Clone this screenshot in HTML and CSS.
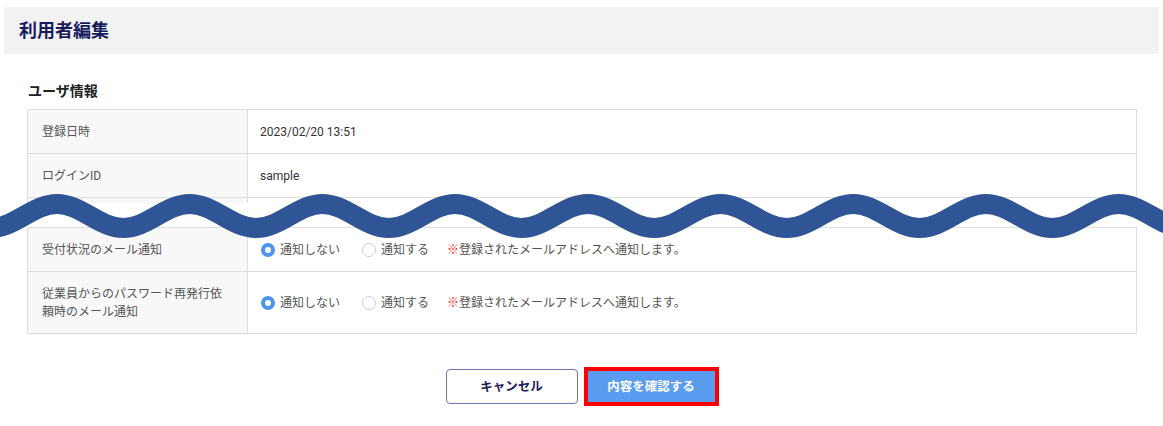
FILE: index.html
```html
<!DOCTYPE html>
<html lang="ja">
<head>
<meta charset="utf-8">
<title>利用者編集</title>
<link rel="stylesheet" href="styles.css">
</head>
<body>
<div class="page">
  <header class="page-header">
    <h1 class="page-title">利用者編集</h1>
  </header>

  <section class="section">
    <h2 class="section-title">ユーザ情報</h2>

    <div class="info-table info-table--top">
      <div class="row row--std">
        <div class="cell-label">登録日時</div>
        <div class="cell-value">2023/02/20 13:51</div>
      </div>
      <div class="row row--std">
        <div class="cell-label">ログインID</div>
        <div class="cell-value">sample</div>
      </div>
      <div class="row row--stub">
        <div class="cell-label"></div>
        <div class="cell-value"></div>
      </div>
    </div>

    <div class="info-table info-table--bottom">
      <div class="row row--std">
        <div class="cell-label">受付状況のメール通知</div>
        <div class="cell-value">
          <div class="radio-group">
            <label class="radio"><input type="radio" name="n1" checked><span>通知しない</span></label>
            <label class="radio"><input type="radio" name="n1"><span>通知する</span></label>
            <p class="note"><span class="note-mark">※</span>登録されたメールアドレスへ通知します。</p>
          </div>
        </div>
      </div>
      <div class="row row--tall">
        <div class="cell-label">従業員からのパスワード再発行依頼時のメール通知</div>
        <div class="cell-value">
          <div class="radio-group">
            <label class="radio"><input type="radio" name="n2" checked><span>通知しない</span></label>
            <label class="radio"><input type="radio" name="n2"><span>通知する</span></label>
            <p class="note"><span class="note-mark">※</span>登録されたメールアドレスへ通知します。</p>
          </div>
        </div>
      </div>
    </div>

    <div class="actions">
      <button type="button" class="btn btn-cancel">キャンセル</button>
      <span class="btn-highlight"><button type="button" class="btn btn-primary">内容を確認する</button></span>
    </div>
  </section>

  <svg class="wave" viewBox="0 0 1163 60" width="1163" height="60" aria-hidden="true">
    <path d="M -75.7 19 C -51.53 19 -33.52 43 -9.35 43 S 32.83 19 57 19 S 99.18 43 123.35 43 S 165.53 19 189.7 19 S 231.88 43 256.05 43 S 298.23 19 322.4 19 S 364.58 43 388.75 43 S 430.93 19 455.1 19 S 497.28 43 521.45 43 S 563.63 19 587.8 19 S 629.98 43 654.15 43 S 696.33 19 720.5 19 S 762.68 43 786.85 43 S 829.03 19 853.2 19 S 895.38 43 919.55 43 S 961.73 19 985.9 19 S 1028.08 43 1052.25 43 S 1094.43 19 1118.6 19 S 1160.78 43 1184.95 43" fill="none" stroke="#2f5597" stroke-width="20"/>
  </svg>
</div>
</body>
</html>
```

FILE: styles.css
```css
* {
  box-sizing: border-box;
}

html, body {
  margin: 0;
  padding: 0;
  background: #ffffff;
}

body {
  font-family: "Roboto", "Noto Sans CJK JP", sans-serif;
  font-size: 12px;
  color: #333333;
}

.page {
  position: relative;
  width: 1163px;
  min-height: 426px;
  padding-top: 7px;
}

.page-header {
  margin: 0 4px;
  height: 47px;
  background: #f2f2f2;
  display: flex;
  align-items: center;
  padding-left: 15px;
}

.page-title {
  margin: 0;
  font-size: 18px;
  font-weight: 700;
  line-height: 24px;
  color: #161b5c;
}

.section {
  padding: 27px 26px 0 27px;
}

.section-title {
  margin: 0 0 8px 1px;
  font-size: 14px;
  font-weight: 700;
  line-height: 20px;
  color: #222222;
}

.info-table {
  border: 1px solid #dddddd;
}

.info-table--top {
  border-bottom: none;
}

.info-table--bottom {
  margin-top: 24px;
}

.row {
  display: grid;
  grid-template-columns: 220px 1fr;
  border-bottom: 1px solid #dddddd;
}

.info-table--bottom .row:last-child {
  border-bottom: none;
}

.row--std {
  height: 44px;
}

.row--tall {
  height: 61px;
}

.row--stub {
  height: 5px;
  border-bottom: none;
}

.cell-label {
  background: #f8f8f8;
  border-right: 1px solid #dddddd;
  padding: 0 20px 0 14px;
  display: flex;
  align-items: center;
  color: #555555;
  font-size: 12px;
  line-height: 18px;
}

.cell-value {
  padding: 0 13px 0 12px;
  display: flex;
  align-items: center;
  color: #333333;
  font-size: 12px;
  line-height: 18px;
}

.radio-group {
  display: flex;
  align-items: center;
}

.radio {
  display: flex;
  align-items: center;
  color: #555555;
  margin-right: 21px;
  cursor: pointer;
}

.radio input {
  -webkit-appearance: none;
  appearance: none;
  width: 14px;
  height: 14px;
  margin: 0 5px 0 1px;
  border-radius: 50%;
  border: 1px solid #cccccc;
  background: #ffffff;
}

.radio input:checked {
  border: 4.5px solid #4d94ee;
}

.note {
  margin: 0 0 0 -3px;
  color: #555555;
}

.note-mark {
  color: #ff1a1a;
  font-weight: 700;
}

.actions {
  margin-top: 33px;
  display: flex;
  justify-content: center;
  align-items: center;
  gap: 6px;
}

.btn {
  font-family: "Roboto", "Noto Sans CJK JP", sans-serif;
  font-size: 12.5px;
  font-weight: 700;
  line-height: 16px;
  padding: 0;
  cursor: pointer;
}

.btn-cancel {
  width: 132px;
  height: 35px;
  background: #ffffff;
  color: #1b1d5c;
  border: 1px solid #7373b3;
  border-radius: 4px;
}

.btn-highlight {
  display: block;
  border: 4px solid #ff0000;
}

.btn-primary {
  display: block;
  width: 127px;
  height: 31px;
  background: #5a9cf0;
  color: #ffffff;
  border: none;
  border-radius: 0;
}

.wave {
  position: absolute;
  left: 0;
  top: 185px;
  display: block;
}
```
